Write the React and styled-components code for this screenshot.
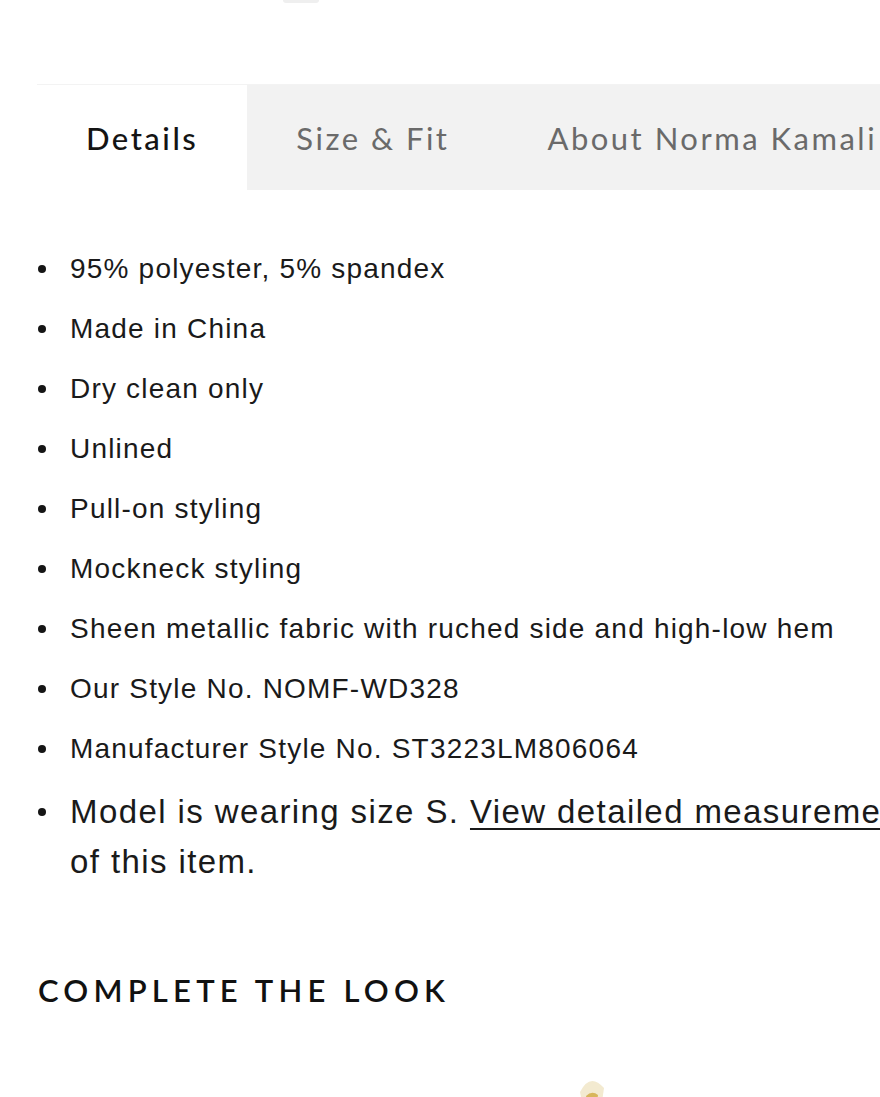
import React from 'react';
import styled, { createGlobalStyle } from 'styled-components';

const GlobalStyle = createGlobalStyle`
    html, body {
        margin: 0;
        padding: 0;
        background: #fff;
        overflow-x: hidden;
    }
    body {
        font-family: "Liberation Sans", Arial, sans-serif;
        color: #1a1a1a;
    }
`;

const Page = styled.div`
    width: 880px;
    overflow: hidden;
`;

const TopArea = styled.div`
    height: 84px;
    display: flex;
    justify-content: center;
    padding-right: 278px;
`;

const TopPeek = styled.div`
    width: 36px;
    height: 3px;
    border-radius: 0 0 18px 18px;
    background: #efefef;
`;

const TabBar = styled.div`
    display: flex;
    width: max-content;
    min-width: 843px;
    margin-left: 37px;
    background: #f2f2f2;
    border-top: 1px solid #f3f3f3;
`;

const Tab = styled.div`
    flex-shrink: 0;
    height: 105px;
    padding: 0 49px;
    display: flex;
    align-items: center;
    font-family: Lato, "Open Sans", sans-serif;
    font-size: 31px;
    letter-spacing: 2.5px;
    white-space: nowrap;
    color: ${p => (p.$active ? '#141414' : '#6a6a6a')};
    background: ${p => (p.$active ? '#fff' : 'transparent')};
    font-weight: ${p => (p.$active ? 500 : 400)};
`;

const List = styled.ul`
    list-style: none;
    margin: 49px 0 0 37px;
    padding: 0;
    width: 900px;
`;

const Item = styled.li`
    display: grid;
    grid-template-columns: 33px 1fr;
    font-size: ${p => (p.$large ? 33 : 28)}px;
    line-height: ${p => (p.$large ? 50 : 60)}px;
    letter-spacing: ${p => (p.$large ? 1.4 : 1.2)}px;
    margin-top: ${p => (p.$large ? 8 : 0)}px;
    color: #1a1a1a;
`;

const BulletCell = styled.span`
    height: ${p => (p.$large ? 50 : 60)}px;
    display: flex;
    align-items: center;
    padding-left: 1px;

    &::before {
        content: "";
        width: 8px;
        height: 8px;
        border-radius: 50%;
        background: #151515;
    }
`;

const Link = styled.a`
    color: inherit;
    text-decoration: underline;
    text-underline-offset: 5px;
    text-decoration-thickness: 2px;
`;

const Heading = styled.h2`
    margin: 83px 0 0 38px;
    font-family: Lato, "Open Sans", sans-serif;
    font-weight: 600;
    font-size: 31px;
    line-height: 40px;
    letter-spacing: 5.2px;
    color: #111;
`;

const LookRow = styled.div`
    margin-top: 52px;
    height: 40px;
    display: flex;
    justify-content: center;
    padding-left: 304px;
`;

const details = [
    '95% polyester, 5% spandex',
    'Made in China',
    'Dry clean only',
    'Unlined',
    'Pull-on styling',
    'Mockneck styling',
    'Sheen metallic fabric with ruched side and high-low hem',
    'Our Style No. NOMF-WD328',
    'Manufacturer Style No. ST3223LM806064',
];

export default function App() {
    return (
        <Page>
            <GlobalStyle />
            <TopArea>
                <TopPeek />
            </TopArea>
            <TabBar>
                <Tab $active>Details</Tab>
                <Tab>Size &amp; Fit</Tab>
                <Tab>About Norma Kamali</Tab>
            </TabBar>
            <List>
                {details.map(d => (
                    <Item key={d}>
                        <BulletCell />
                        <span>{d}</span>
                    </Item>
                ))}
                <Item $large>
                    <BulletCell $large />
                    <span>
                        Model is wearing size S. <Link href="#">View detailed measurements</Link> of this item.
                    </span>
                </Item>
            </List>
            <Heading>COMPLETE THE LOOK</Heading>
            <LookRow>
                <svg width="40" height="40" viewBox="0 0 40 40">
                    <path d="M8 30 Q18 10 32 26 L30 40 L10 40 Z" fill="#f3ead0" />
                    <path d="M14 34 Q20 28 26 33 L25 40 L15 40 Z" fill="#d8b65c" />
                </svg>
            </LookRow>
        </Page>
    );
}
